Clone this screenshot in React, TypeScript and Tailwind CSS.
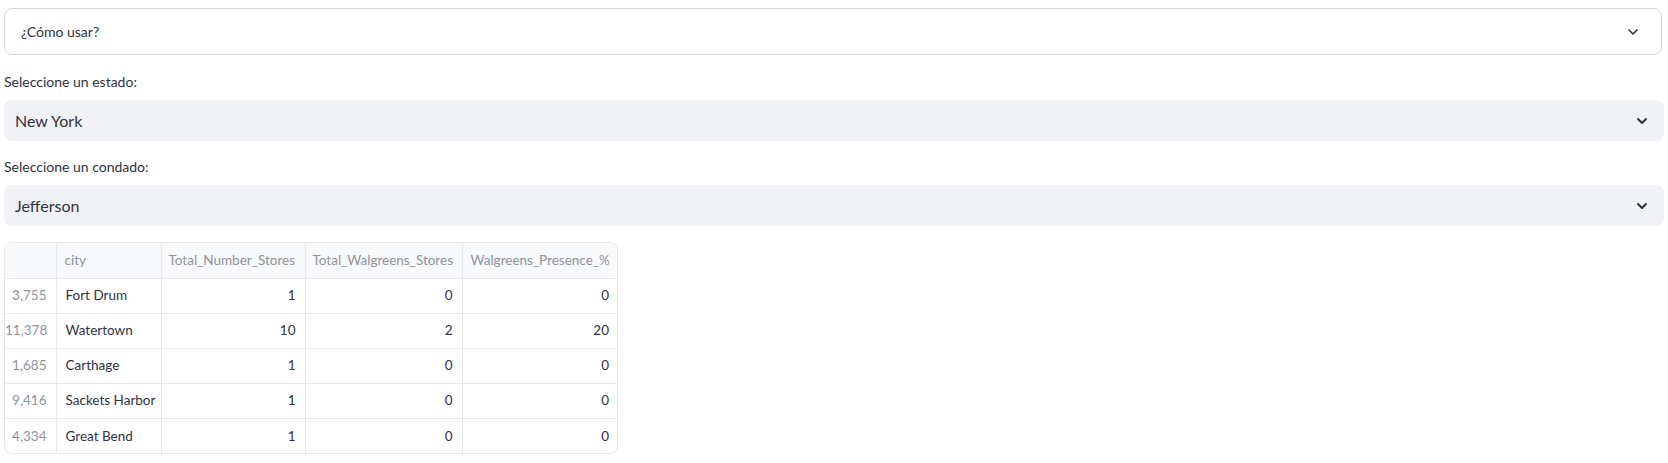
import { ChevronDown } from "lucide-react";

const rows = [
  { idx: "3,755", city: "Fort Drum", total: 1, wal: 0, pct: 0 },
  { idx: "11,378", city: "Watertown", total: 10, wal: 2, pct: 20 },
  { idx: "1,685", city: "Carthage", total: 1, wal: 0, pct: 0 },
  { idx: "9,416", city: "Sackets Harbor", total: 1, wal: 0, pct: 0 },
  { idx: "4,334", city: "Great Bend", total: 1, wal: 0, pct: 0 },
];

function Select({ label, value }: { label: string; value: string }) {
  return (
    <div className="flex flex-col">
      <label className="text-[14px] leading-[20px] text-[#31333f] h-[20px] mb-[8px]">{label}</label>
      <div className="h-[41px] bg-[#f0f2f6] rounded-[8px] flex items-center justify-between pl-[11px] pr-[14px]">
        <span className="text-[16px] text-[#31333f]">{value}</span>
        <ChevronDown size={16} strokeWidth={3} className="text-[#31333f]" />
      </div>
    </div>
  );
}

export default function App() {
  return (
    <div className="w-[1668px] h-[463px] bg-white px-[4px] pt-[8px] font-['Lato','Liberation_Sans',sans-serif] text-[#31333f]">
      <div className="h-[47px] border border-[#d6d6d9] rounded-[8px] flex items-center justify-between pl-[16px] pr-[20px] mr-[2px]">
        <span className="text-[14px]">¿Cómo usar?</span>
        <ChevronDown size={16} strokeWidth={2.5} className="text-[#31333f]" />
      </div>

      <div className="mt-[17px] flex flex-col gap-[16px]">
        <Select label="Seleccione un estado:" value="New York" />
        <Select label="Seleccione un condado:" value="Jefferson" />
      </div>

      <div className="mt-[16px] w-[614px] border border-[#e6e8ec] rounded-[8px] overflow-hidden">
        <table className="border-collapse text-[13.5px] w-full table-fixed whitespace-nowrap">
          <colgroup>
            <col className="w-[51px]" />
            <col className="w-[105px]" />
            <col className="w-[144px]" />
            <col className="w-[157px]" />
            <col className="w-[156px]" />
          </colgroup>
          <thead>
            <tr className="h-[35px] bg-[#f8f9fb] text-[#8f939e]">
              <th className="border-r border-b border-[#e6e8ec] font-normal"></th>
              <th className="border-r border-b border-[#e6e8ec] font-normal text-left px-[8px]">city</th>
              <th className="border-r border-b border-[#e6e8ec] font-normal text-left px-[7px]">Total_Number_Stores</th>
              <th className="border-r border-b border-[#e6e8ec] font-normal text-left px-[7px]">Total_Walgreens_Stores</th>
              <th className="border-b border-[#e6e8ec] font-normal text-left px-[8px]">Walgreens_Presence_%</th>
            </tr>
          </thead>
          <tbody>
            {rows.map((r, i) => (
              <tr key={r.idx} className="h-[35px]">
                <td className={`border-r border-[#e6e8ec] text-right pr-[9px] text-[#8f939e] ${i < rows.length - 1 ? "border-b" : ""}`}>{r.idx}</td>
                <td className={`border-r border-[#e6e8ec] text-left px-[9px] ${i < rows.length - 1 ? "border-b" : ""}`}>{r.city}</td>
                <td className={`border-r border-[#e6e8ec] text-right px-[9px] ${i < rows.length - 1 ? "border-b" : ""}`}>{r.total}</td>
                <td className={`border-r border-[#e6e8ec] text-right px-[9px] ${i < rows.length - 1 ? "border-b" : ""}`}>{r.wal}</td>
                <td className={`border-[#e6e8ec] text-right px-[9px] ${i < rows.length - 1 ? "border-b" : ""}`}>{r.pct}</td>
              </tr>
            ))}
          </tbody>
        </table>
      </div>
    </div>
  );
}
